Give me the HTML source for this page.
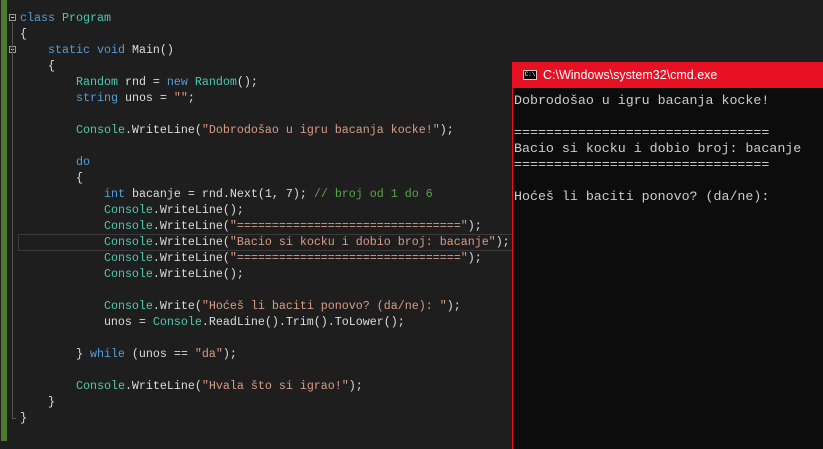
<!DOCTYPE html>
<html><head><meta charset="utf-8"><style>
body{margin:0;width:823px;height:449px;background:#1e1e1e;overflow:hidden;position:relative;font-family:"Liberation Mono",monospace}
.bar{position:absolute;left:1px;top:0;width:6px;height:441px;background:#4f7a2f}
.code{position:absolute;left:20px;top:10px;font-size:11.67px;line-height:16px;color:#dcdcdc;white-space:pre}
.k{color:#569cd6}.t{color:#4ec9b0}.s{color:#d69d85}.c{color:#57a64a}
.cur{position:absolute;left:18px;top:234px;width:494px;height:15px;border:1px solid #3a3a3a}
.vl{position:absolute;width:1px;background:#555}
.fold{position:absolute;left:9px;width:7px;height:7px;border:1px solid #999;box-sizing:border-box}
.fold:after{content:"";position:absolute;left:1px;top:2px;width:3px;height:1px;background:#ccc}
.cmd{position:absolute;left:512px;top:62px;width:311px;height:387px;background:#0c0c0c;border-left:1px solid #e81123}
.tb{height:26px;background:#e81123;color:#fff;font-family:"Liberation Sans",sans-serif;font-size:12.5px;line-height:26px;padding-left:30px;position:relative}
.ico{position:absolute;left:10px;top:8px;width:14px;height:10px;background:#000;border:1px solid #ccc;box-sizing:border-box;font-size:6px;line-height:8px;color:#fff;text-align:center;font-family:"Liberation Mono",monospace}
.out{color:#cccccc;font-size:13.3px;line-height:16px;white-space:pre;padding:5px 0 0 1px}
</style></head><body>
<div class="bar"></div>
<div class="fold" style="top:14px"></div>
<div class="fold" style="top:46px"></div>
<div class="vl" style="left:12px;top:22px;height:397px"></div>
<div class="vl" style="left:12px;top:418px;height:1px;width:4px"></div>
<div class="cur"></div>
<div class="code"><span class="k">class</span> <span class="t">Program</span>
{
    <span class="k">static</span> <span class="k">void</span> Main()
    {
        <span class="t">Random</span> rnd = <span class="k">new</span> <span class="t">Random</span>();
        <span class="k">string</span> unos = <span class="s">""</span>;

        <span class="t">Console</span>.WriteLine(<span class="s">"Dobrodošao u igru bacanja kocke!"</span>);

        <span class="k">do</span>
        {
            <span class="k">int</span> bacanje = rnd.Next(1, 7); <span class="c">// broj od 1 do 6</span>
            <span class="t">Console</span>.WriteLine();
            <span class="t">Console</span>.WriteLine(<span class="s">"================================"</span>);
            <span class="t">Console</span>.WriteLine(<span class="s">"Bacio si kocku i dobio broj: bacanje"</span>);
            <span class="t">Console</span>.WriteLine(<span class="s">"================================"</span>);
            <span class="t">Console</span>.WriteLine();

            <span class="t">Console</span>.Write(<span class="s">"Hoćeš li baciti ponovo? (da/ne): "</span>);
            unos = <span class="t">Console</span>.ReadLine().Trim().ToLower();

        } <span class="k">while</span> (unos == <span class="s">"da"</span>);

        <span class="t">Console</span>.WriteLine(<span class="s">"Hvala što si igrao!"</span>);
    }
}</div>
<div class="cmd"><div class="tb"><div class="ico">C:\</div>C:\Windows\system32\cmd.exe</div><div class="out">Dobrodošao u igru bacanja kocke!

================================
Bacio si kocku i dobio broj: bacanje
================================

Hoćeš li baciti ponovo? (da/ne):</div></div>
</body></html>
